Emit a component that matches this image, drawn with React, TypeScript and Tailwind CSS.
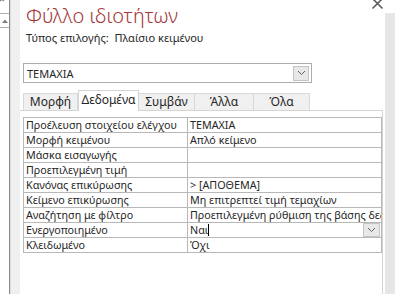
import React from 'react';

const rows: [string, string][] = [
  ['Προέλευση στοιχείου ελέγχου', 'ΤΕΜΑΧΙΑ'],
  ['Μορφή κειμένου', 'Απλό κείμενο'],
  ['Μάσκα εισαγωγής', ''],
  ['Προεπιλεγμένη τιμή', ''],
  ['Κανόνας επικύρωσης', '> [ΑΠΟΘΕΜΑ]'],
  ['Κείμενο επικύρωσης', 'Μη επιτρεπτεί τιμή τεμαχίων'],
  ['Αναζήτηση με φίλτρο', 'Προεπιλεγμένη ρύθμιση της βάσης δεδομένων'],
  ['Ενεργοποιημένο', 'Ναι'],
  ['Κλειδωμένο', 'Όχι'],
];

const tabs = ['Μορφή', 'Δεδομένα', 'Συμβάν', 'Άλλα', 'Όλα'];
const tabWidths = ['w-[55px]', 'w-[61px]', 'w-[56px]', 'w-[59px]', 'w-[56px]'];

function Chevron() {
  return (
    <svg width="9" height="6" viewBox="0 0 9 6" fill="none">
      <path d="M1 1 L4.5 4.5 L8 1" stroke="#606060" strokeWidth="1" />
    </svg>
  );
}

function DropButton({ cls }: { cls: string }) {
  return (
    <div className={`flex items-center justify-center bg-[#e8e8e8] border border-[#c4c4c4] ${cls}`}>
      <Chevron />
    </div>
  );
}

export default function App() {
  return (
    <div className="w-[395px] h-[294px] overflow-hidden bg-white flex text-[#262626] font-['Noto_Sans','Open_Sans',sans-serif]">
      {/* Left strip */}
      <div className="w-[9px] flex flex-col bg-white relative">
        <span className="absolute -top-[6px] -left-[1px] text-[10px] leading-none text-[#444]">×</span>
        <div className="mt-[13px] h-[15px] border-t border-b border-[#b0b0b0] flex items-center justify-center">
          <svg width="6" height="4" viewBox="0 0 6 4">
            <path d="M0 4 L3 0.5 L6 4 Z" fill="#808080" />
          </svg>
        </div>
      </div>
      <div className="w-px bg-[#8a8a8a]" />
      <div className="w-px bg-[#dcdcdc]" />
      <div className="w-[9px] bg-[#f0f0f0]" />

      {/* Property sheet */}
      <div className="w-[365px] flex flex-col">
        <div className="pl-[6px] pt-[3px] h-[28px] text-[20px] leading-[26px] font-light text-[#a4373a]">
          Φύλλο ιδιοτήτων
        </div>
        <div className="pl-[6px] mt-[3px] text-[11px] leading-[14px]">
          Τύπος επιλογής:&nbsp;&nbsp;Πλαίσιο κειμένου
        </div>
        <div className="ml-[3px] mt-[18px] w-[289px] h-[20px] border border-[#acacac] flex items-center justify-between pl-[3px] pr-[2px]">
          <span className="text-[11px] leading-none">ΤΕΜΑΧΙΑ</span>
          <DropButton cls="w-[16px] h-[15px]" />
        </div>

        {/* Tabs */}
        <div className="ml-[3px] mt-[6px] h-[21px] flex items-end">
          {tabs.map((t, i) =>
            i === 1 ? (
              <div
                key={t}
                className={`${tabWidths[i]} h-[21px] bg-white border border-b-0 border-[#d4d4d4] flex items-start justify-center pt-[1px] text-[12px] leading-[16px] -mb-px relative z-10`}
              >
                {t}
              </div>
            ) : (
              <div
                key={t}
                className={`${tabWidths[i]} h-[17px] bg-[#f0f0f0] border border-b-0 border-l-0 first:border-l border-[#d9d9d9] flex items-center justify-center text-[12px] leading-none`}
              >
                {t}
              </div>
            )
          )}
        </div>

        {/* Tab page */}
        <div className="flex-1 border-t border-r border-[#d4d4d4] pl-[3px] pt-[6px] mr-[2px]">
          <div className="border-t border-l border-[#b8b8b8]">
            {rows.map(([k, v], i) => (
              <div key={k} className="flex h-[15px] border-b border-[#b8b8b8] text-[10.75px] leading-[14px]">
                <div className="w-[164px] border-r border-[#b8b8b8] pl-[2px] whitespace-nowrap overflow-hidden">{k}</div>
                <div className="flex-1 pl-[2px] whitespace-nowrap overflow-hidden flex items-center relative">
                  <span>{v}</span>
                  {i === 7 && (
                    <>
                      <span className="w-px h-[12px] bg-black" />
                      <DropButton cls="absolute right-[1px] top-0 w-[17px] h-[14px]" />
                    </>
                  )}
                </div>
                <div className="w-px bg-[#b8b8b8]" />
              </div>
            ))}
          </div>
        </div>
      </div>

      {/* Right gray strip */}
      <div className="flex-1 flex flex-col relative">
        <div className="h-[13px] bg-white" />
        <div className="flex-1 bg-[#e6e6e6]" />
        <svg className="absolute -left-[14px] -top-[3px]" width="13" height="13" viewBox="0 0 13 13">
          <path d="M1.5 1.5 L11.5 11.5 M11.5 1.5 L1.5 11.5" stroke="#5a5a5a" strokeWidth="1.6" />
        </svg>
      </div>
    </div>
  );
}
